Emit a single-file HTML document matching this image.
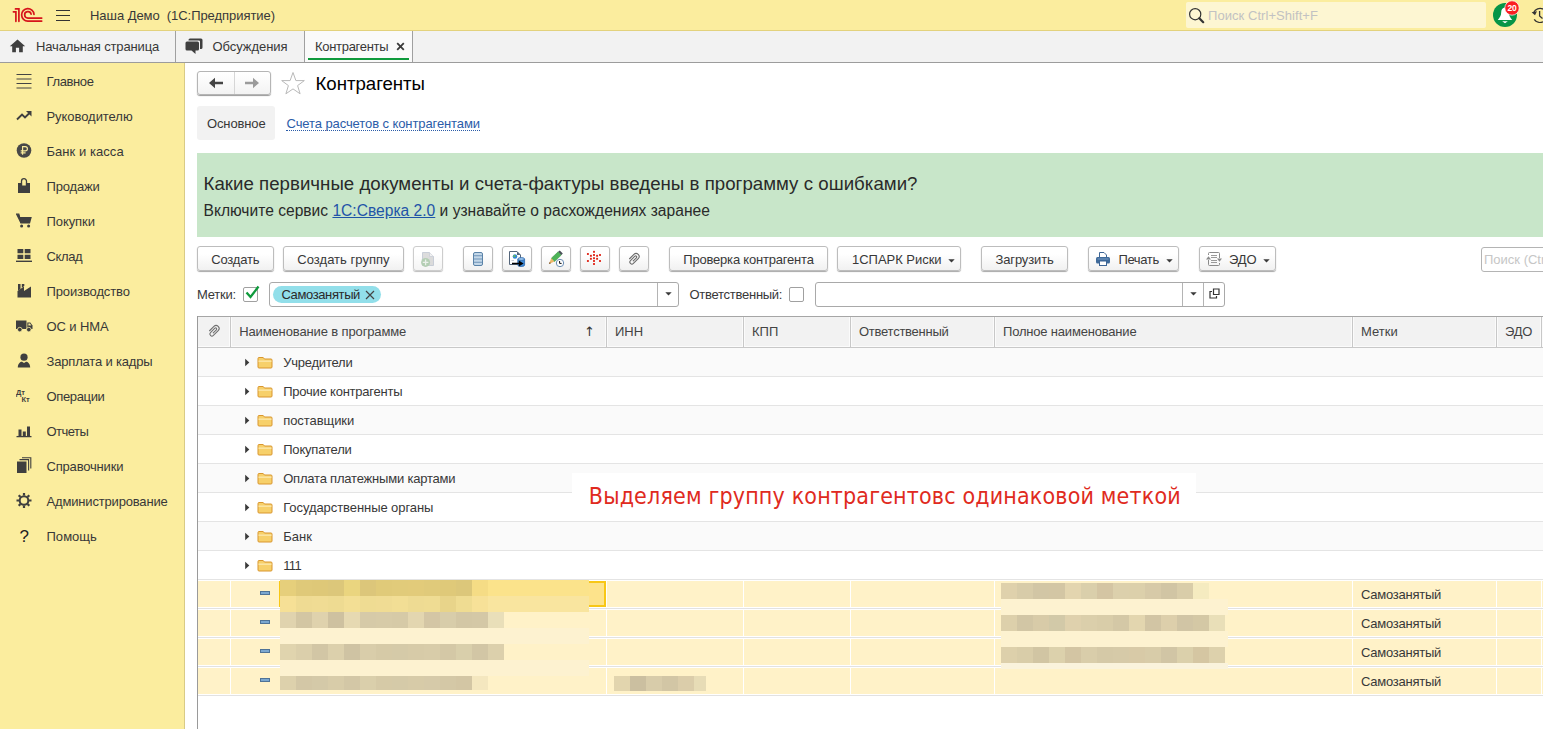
<!DOCTYPE html>
<html lang="ru"><head><meta charset="utf-8"><title>Контрагенты</title>
<style>
*{box-sizing:border-box;margin:0;padding:0}
html,body{width:1543px;height:729px;overflow:hidden;background:#fff}
body{font-family:"Liberation Sans",sans-serif;font-size:13px;color:#333;position:relative}
.abs{position:absolute}
.t{position:absolute;white-space:pre;line-height:1}
#top{position:absolute;left:0;top:0;width:1543px;height:31px;background:#fbed9e;border-bottom:1px solid #e3d27d}
#tabs{position:absolute;left:0;top:31px;width:1543px;height:32px;background:#f2f2f2;border-bottom:1px solid #9c9c9c}
#side{position:absolute;left:0;top:63px;width:185px;height:666px;background:#fbed9e;border-right:1px solid #d9cb86}
.sep{position:absolute;top:31px;width:1px;height:31px;background:#a0a0a0}
.btn{position:absolute;top:246px;height:25px;border:1px solid #bdbdbd;border-radius:3px;background:linear-gradient(#fff 30%,#f1f1f1);box-shadow:0 1px 1px #a8a8a8}
.inp{position:absolute;top:282px;height:25px;border:1px solid #a9a9a9;border-radius:3px;background:#fff}
.cb{position:absolute;top:287px;width:15px;height:15px;border:1px solid #a0a0a0;border-radius:2px;background:#fff}
.row{position:absolute;left:198px;width:1345px;height:28px}
.ln{position:absolute;left:198px;width:1345px;height:1px;background:#e4e4e4}
.cell{position:absolute;background:#fff2c8;height:26px}
.vs{position:absolute;top:317px;width:1px;height:30px;background:#d0d0d0;border-left:0}
.mz{position:absolute;height:16px;width:16px}
</style></head><body>

<div id="top"></div>
<svg class="abs" style="left:12px;top:7px" width="32" height="16" viewBox="0 0 32 16"><g fill="none" stroke="#d6141b" stroke-width="1.7" stroke-linecap="round" stroke-linejoin="miter"><path d="M3.500 1.900H6.900V14.300"/><path d="M1.400 4.800H3.900V14.300"/><path d="M22 7.300A6.200 6.200 0 1 0 15.850 14.050H29.700"/><path d="M19.100 7.200A3.250 3.250 0 1 0 15.900 11.100H29.700"/></g></svg>
<svg class="abs" style="left:56px;top:9px" width="15" height="13" viewBox="0 0 15 13"><g stroke="#333" stroke-width="1.2"><path d="M0 1.5H14M0 6.5H14M0 11.5H14"/></g></svg>
<span class="t" style="left:90px;top:9.00px;font-size:13px;color:#383838;letter-spacing:-0.049px;">Наша Демо  (1С:Предприятие)</span>
<div class="abs" style="left:1186px;top:2px;width:300px;height:26px;background:#fdf6d2;border-radius:2px"></div>
<svg class="abs" style="left:1188px;top:7px" width="17" height="17" viewBox="0 0 17 17"><circle cx="7.2" cy="7.2" r="5.6" fill="none" stroke="#333" stroke-width="1.2"/><path d="M11.3 11.3L15.2 15.2" stroke="#333" stroke-width="2.2" stroke-linecap="round"/></svg>
<span class="t" style="left:1208px;top:9.00px;font-size:13px;color:#c2c2c2;letter-spacing:0.056px;">Поиск Ctrl+Shift+F</span>
<svg class="abs" style="left:1490px;top:0" width="32" height="31" viewBox="0 0 32 31"><circle cx="15" cy="15" r="12" fill="#069547"/><path d="M15 7.500c-2.600 0-3.800 2.200-3.800 4.800 0 3.500-1.600 5.600-3.400 7.600h14.400c-1.800-2-3.400-4.100-3.400-7.600 0-2.600-1.200-4.800-3.800-4.800z" fill="#fff"/><path d="M12.200 21.200H17.800L15 23.200z" fill="#fff"/><circle cx="22" cy="8" r="7.200" fill="#fb1f22" stroke="#fff" stroke-width="0.700"/><text x="22.100" y="11" font-family="Liberation Sans, sans-serif" font-size="8.500" font-weight="bold" fill="#fff" text-anchor="middle" letter-spacing="-0.200">20</text></svg>
<svg class="abs" style="left:1530px;top:6px" width="13" height="20" viewBox="0 0 13 20"><g fill="none" stroke="#333" stroke-width="1.300"><path d="M13 3.080A7 7 0 0 0 3.700 6.500"/><path d="M4.200 13.300A7 7 0 0 0 13 15.730"/><path d="M9.600 5V10L12.500 12.500"/></g><path d="M1.600 6.200L7 5.300L5 9.300z" fill="#333"/></svg>
<div id="tabs"></div>
<div class="abs" style="left:305px;top:31px;width:107px;height:31px;background:#fafafa"></div>
<div class="sep" style="left:175px"></div><div class="sep" style="left:304px"></div><div class="sep" style="left:412px"></div>
<svg class="abs" style="left:9px;top:39px" width="17" height="14" viewBox="0 0 17 14"><path d="M8.500 0.600L0.800 7.300H3.200V13.200H6.900V8.800H10.100V13.200H13.800V7.300H16.200z" fill="#3f3f3f"/></svg>
<span class="t" style="left:36px;top:40.00px;font-size:13px;color:#383838;letter-spacing:-0.155px;">Начальная страница</span>
<svg class="abs" style="left:185px;top:38px" width="18" height="17" viewBox="0 0 18 17"><path d="M5 0.500H16a1.500 1.500 0 0 1 1.500 1.500V9.500a1.500 1.500 0 0 1-1.500 1.500H15V3.500a1 1 0 0 0-1-1H3.500V2A1.500 1.500 0 0 1 5 0.500z" fill="#3f3f3f"/><path d="M2 3.500H12.500a1.500 1.500 0 0 1 1.500 1.500V11a1.500 1.500 0 0 1-1.500 1.500H10.500V16L6.500 12.500H2A1.500 1.500 0 0 1 0.500 11V5A1.500 1.500 0 0 1 2 3.500z" fill="#3f3f3f"/></svg>
<span class="t" style="left:212.5px;top:40.00px;font-size:13px;color:#383838;letter-spacing:-0.056px;">Обсуждения</span>
<span class="t" style="left:315px;top:40.00px;font-size:13px;color:#383838;letter-spacing:-0.297px;">Контрагенты</span>
<svg class="abs" style="left:396px;top:42px" width="9" height="9" viewBox="0 0 9 9"><path d="M1.200 1.200L7.800 7.800M7.800 1.200L1.200 7.800" stroke="#3a3a3a" stroke-width="1.800"/></svg>
<div class="abs" style="left:308px;top:58px;width:101px;height:2px;background:#0f9a3c"></div>
<div id="side"></div>
<svg class="abs" style="left:16px;top:72px" width="17" height="17" viewBox="0 0 17 17"><path d="M0 0.600H15M0 5.100H15M0 9.600H15M0 14.100H15" stroke="#444" stroke-width="1.100" transform="translate(0.500,1.900)"/></svg>
<span class="t" style="left:46.5px;top:75.00px;font-size:13px;color:#383838;letter-spacing:-0.382px;">Главное</span>
<svg class="abs" style="left:16px;top:107px" width="17" height="17" viewBox="0 0 17 17"><path d="M1 12.500L6 7.500L9 10.500L14 5.500" fill="none" stroke="#3f3f3f" stroke-width="1.900"/><path d="M10 4H15.500V9.500z" fill="#3f3f3f"/></svg>
<span class="t" style="left:46.5px;top:110.00px;font-size:13px;color:#383838;letter-spacing:-0.053px;">Руководителю</span>
<svg class="abs" style="left:16px;top:142px" width="17" height="17" viewBox="0 0 17 17"><circle cx="8" cy="8.500" r="7.300" fill="#484848"/><path d="M6.600 12.800V4.600H9.300a2.100 2.100 0 0 1 0 4.200H4.700M4.700 10.800H9.600" fill="none" stroke="#fbed9e" stroke-width="1.150"/></svg>
<span class="t" style="left:46.5px;top:145.00px;font-size:13px;color:#383838;letter-spacing:0.054px;">Банк и касса</span>
<svg class="abs" style="left:16px;top:177px" width="17" height="17" viewBox="0 0 17 17"><path d="M2 6H14V16H2z" fill="#3f3f3f"/><path d="M5.500 8.500V4.200a2.500 2.500 0 0 1 5 0V8.500" fill="none" stroke="#3f3f3f" stroke-width="1.300"/><path d="M6.200 6h3.600v2.500h-3.600z" fill="#fbed9e"/></svg>
<span class="t" style="left:46.5px;top:180.00px;font-size:13px;color:#383838;letter-spacing:-0.157px;">Продажи</span>
<svg class="abs" style="left:16px;top:212px" width="17" height="17" viewBox="0 0 17 17"><path d="M0 2.200H2.800L4 5H15.800L14 11.500H4.600z" fill="#3f3f3f"/><path d="M0 2.200H2.800L5 11" fill="none" stroke="#3f3f3f" stroke-width="1.300"/><circle cx="5.600" cy="14" r="1.500" fill="#3f3f3f"/><circle cx="12.600" cy="14" r="1.500" fill="#3f3f3f"/></svg>
<span class="t" style="left:46.5px;top:215.00px;font-size:13px;color:#383838;letter-spacing:-0.072px;">Покупки</span>
<svg class="abs" style="left:16px;top:247px" width="17" height="17" viewBox="0 0 17 17"><path d="M1.500 2H7.300V6.300H1.500zM8.700 2H14.500V6.300H8.700zM1.500 7.700H7.300V12H1.500zM8.700 7.700H14.500V12H8.700z" fill="#3f3f3f"/><path d="M0 14.300H16" stroke="#3f3f3f" stroke-width="1.400"/></svg>
<span class="t" style="left:46.5px;top:250.00px;font-size:13px;color:#383838;letter-spacing:-0.385px;">Склад</span>
<svg class="abs" style="left:16px;top:282px" width="17" height="17" viewBox="0 0 17 17"><path d="M1.500 15.500V9L8 4.500V9L15 4.500V15.500z" fill="#3f3f3f"/><path d="M2 2H4.500V7L2 8.800zM5.800 2H8.300V4L5.800 5.800z" fill="#3f3f3f"/></svg>
<span class="t" style="left:46.5px;top:285.00px;font-size:13px;color:#383838;letter-spacing:-0.122px;">Производство</span>
<svg class="abs" style="left:16px;top:317px" width="17" height="17" viewBox="0 0 17 17"><path d="M0 3.500H10.500V12H0z" fill="#3f3f3f"/><path d="M11.300 5.500H14.300L16.500 8.500V12H11.300z" fill="#3f3f3f"/><path d="M12.400 6.600h1.600l1.300 2h-2.900z" fill="#fbed9e"/><circle cx="3.800" cy="12.600" r="2.300" fill="#3f3f3f" stroke="#fbed9e" stroke-width="0.800"/><circle cx="12.800" cy="12.600" r="2.300" fill="#3f3f3f" stroke="#fbed9e" stroke-width="0.800"/></svg>
<span class="t" style="left:46.5px;top:320.00px;font-size:13px;color:#383838;letter-spacing:-0.097px;">ОС и НМА</span>
<svg class="abs" style="left:16px;top:352px" width="17" height="17" viewBox="0 0 17 17"><circle cx="8" cy="5.200" r="3.600" fill="#3f3f3f"/><path d="M1.800 15.500c0-4 2.500-5.800 4.200-5.800l2 1.200 2-1.200c1.700 0 4.200 1.800 4.200 5.800z" fill="#3f3f3f"/></svg>
<span class="t" style="left:46.5px;top:355.00px;font-size:13px;color:#383838;letter-spacing:-0.174px;">Зарплата и кадры</span>
<svg class="abs" style="left:16px;top:387px" width="17" height="17" viewBox="0 0 17 17"><text x="0" y="7.500" font-family="Liberation Sans,sans-serif" font-weight="bold" font-size="7.500" fill="#3f3f3f">Дт</text><text x="5.500" y="14.500" font-family="Liberation Sans,sans-serif" font-weight="bold" font-size="7.500" fill="#3f3f3f">Кт</text></svg>
<span class="t" style="left:46.5px;top:390.00px;font-size:13px;color:#383838;letter-spacing:-0.352px;">Операции</span>
<svg class="abs" style="left:16px;top:422px" width="17" height="17" viewBox="0 0 17 17"><path d="M2.500 7.500H5.500V14H2.500zM6.800 9.500H9.800V14H6.800zM11 4.500H14V14H11z" fill="#3f3f3f"/><path d="M0.500 14.600H15.500" stroke="#3f3f3f" stroke-width="1.300"/></svg>
<span class="t" style="left:46.5px;top:425.00px;font-size:13px;color:#383838;letter-spacing:-0.506px;">Отчеты</span>
<svg class="abs" style="left:16px;top:457px" width="17" height="17" viewBox="0 0 17 17"><path d="M1 4.500H10.500V16H1z" fill="#3f3f3f"/><path d="M3.500 2.600H12.600V13.500M6 0.700H14.800V11.500" fill="none" stroke="#3f3f3f" stroke-width="1.100"/></svg>
<span class="t" style="left:46.5px;top:460.00px;font-size:13px;color:#383838;letter-spacing:-0.179px;">Справочники</span>
<svg class="abs" style="left:16px;top:492px" width="17" height="17" viewBox="0 0 17 17"><circle cx="8" cy="8.500" r="4.300" fill="none" stroke="#3f3f3f" stroke-width="2"/><g stroke="#3f3f3f" stroke-width="2.200"><path d="M8 1V3.500M8 13.500V16M0.500 8.500H3M13 8.500H15.500M2.700 3.200L4.500 5M11.500 12L13.300 13.800M2.700 13.800L4.500 12M11.500 5L13.300 3.200"/></g></svg>
<span class="t" style="left:46.5px;top:495.00px;font-size:13px;color:#383838;letter-spacing:-0.169px;">Администрирование</span>
<svg class="abs" style="left:16px;top:527px" width="17" height="17" viewBox="0 0 17 17"><text x="3.500" y="14.500" font-family="Liberation Sans,sans-serif" font-size="17" fill="#222">?</text></svg>
<span class="t" style="left:46.5px;top:530.00px;font-size:13px;color:#383838;letter-spacing:0.030px;">Помощь</span>
<div class="abs" style="left:197px;top:71px;width:74px;height:24px;border:1px solid #b5b5b5;border-radius:3px;background:linear-gradient(#fff,#f3f3f3);box-shadow:0 1px 1px #999"></div>
<div class="abs" style="left:234px;top:72px;width:1px;height:22px;background:#d6d6d6"></div>
<svg class="abs" style="left:208px;top:77px" width="16" height="12" viewBox="0 0 16 12"><path d="M1 6L7 0.800V4.700H15V7.300H7V11.200z" fill="#444"/></svg>
<svg class="abs" style="left:244px;top:77px" width="16" height="12" viewBox="0 0 16 12"><path d="M15 6L9 0.800V4.700H1V7.300H9V11.200z" fill="#9b9b9b"/></svg>
<svg class="abs" style="left:280px;top:71px" width="26" height="25" viewBox="0 0 26 25"><path d="M13 1.500L15.900 9.600H24.300L17.600 14.600L20.100 22.800L13 17.900L5.900 22.800L8.400 14.600L1.700 9.600H10.100z" fill="#fff" stroke="#b9b9b9" stroke-width="1"/></svg>
<span class="t" style="left:315.5px;top:74.80px;font-size:18.67px;color:#000;letter-spacing:-0.034px;">Контрагенты</span>
<div class="abs" style="left:197px;top:106px;width:78px;height:34px;background:#f2f2f2;border-radius:3px"></div>
<span class="t" style="left:207px;top:117.00px;font-size:13px;color:#383838;letter-spacing:-0.135px;">Основное</span>
<span class="t" style="left:286.5px;top:117.00px;font-size:13px;color:#2b5ca8;letter-spacing:-0.093px;">Счета расчетов с контрагентами</span>
<div class="abs" style="left:286px;top:130px;width:194px;height:0;border-top:1px dotted #2b5ca8"></div>
<div class="abs" style="left:197px;top:153px;width:1346px;height:84px;background:#c8e6c9"></div>
<span class="t" style="left:203.5px;top:174.80px;font-size:18.67px;color:#2a2a2a;letter-spacing:0.025px;">Какие первичные документы и счета-фактуры введены в программу с ошибками?</span>
<span class="t" style="left:203.5px;top:202.99px;font-size:15.6px;color:#2a2a2a;">Включите сервис <span style="color:#1f54a8;text-decoration:underline">1С:Сверка 2.0</span> и узнавайте о расхождениях заранее</span>
<div class="btn" style="left:197px;width:77px;"></div>
<span class="t" style="left:211.3px;top:252.60px;font-size:13px;color:#383838;letter-spacing:-0.201px;">Создать</span>
<div class="btn" style="left:283px;width:121px;"></div>
<span class="t" style="left:297.3px;top:252.60px;font-size:13px;color:#383838;letter-spacing:0.027px;">Создать группу</span>
<div class="btn" style="left:413px;width:30px;opacity:.75"></div>
<div class="btn" style="left:463px;width:30px;"></div>
<div class="btn" style="left:502px;width:30px;"></div>
<div class="btn" style="left:541px;width:30px;"></div>
<div class="btn" style="left:580px;width:30px;"></div>
<div class="btn" style="left:619px;width:30px;"></div>
<div class="btn" style="left:669px;width:159px;"></div>
<span class="t" style="left:683.3px;top:252.60px;font-size:13px;color:#383838;letter-spacing:-0.200px;">Проверка контрагента</span>
<div class="btn" style="left:837px;width:124px;"></div>
<span class="t" style="left:852px;top:252.60px;font-size:13px;color:#383838;letter-spacing:-0.023px;">1СПАРК Риски</span>
<div class="btn" style="left:981px;width:87px;"></div>
<span class="t" style="left:995.5px;top:252.60px;font-size:13px;color:#383838;letter-spacing:-0.140px;">Загрузить</span>
<div class="btn" style="left:1088px;width:91px;"></div>
<span class="t" style="left:1118.4px;top:252.60px;font-size:13px;color:#383838;letter-spacing:-0.349px;">Печать</span>
<div class="btn" style="left:1199px;width:77px;"></div>
<span class="t" style="left:1229.1px;top:252.60px;font-size:13px;color:#383838;letter-spacing:-0.176px;">ЭДО</span>
<svg class="abs" style="left:947.5px;top:258.5px" width="7" height="4" viewBox="0 0 7 4"><path d="M0.300 0.300H6.700L3.500 3.600z" fill="#3a3a3a"/></svg>
<svg class="abs" style="left:1165.5px;top:258.5px" width="7" height="4" viewBox="0 0 7 4"><path d="M0.300 0.300H6.700L3.500 3.600z" fill="#3a3a3a"/></svg>
<svg class="abs" style="left:1262.5px;top:258.5px" width="7" height="4" viewBox="0 0 7 4"><path d="M0.300 0.300H6.700L3.500 3.600z" fill="#3a3a3a"/></svg>
<div class="abs" style="left:1481px;top:247px;width:70px;height:25px;border:1px solid #b4b4b4;border-radius:3px;background:#fff"></div>
<span class="t" style="left:1484px;top:252.60px;font-size:13px;color:#c6c6c6;">Поиск (Ctrl+F)</span>
<span class="t" style="left:197px;top:288.00px;font-size:13px;color:#383838;letter-spacing:-0.216px;">Метки:</span>
<div class="cb" style="left:243px"></div>
<svg class="abs" style="left:245px;top:284px" width="15" height="16" viewBox="0 0 15 16"><path d="M1.500 8.500L5.500 13L13.500 2.500" fill="none" stroke="#0f9a3c" stroke-width="2.300"/></svg>
<div class="inp" style="left:269px;width:410px"></div><div class="abs" style="left:657px;top:283px;width:1px;height:23px;background:#b4b4b4"></div>
<div class="abs" style="left:273px;top:286px;width:108px;height:17px;border-radius:9px;background:#92dfea"></div>
<span class="t" style="left:281.4px;top:288.00px;font-size:13px;color:#2a2a2a;letter-spacing:-0.379px;">Самозанятый</span>
<svg class="abs" style="left:365px;top:290px" width="10" height="10" viewBox="0 0 10 10"><path d="M1 1L9 9M9 1L1 9" stroke="#444" stroke-width="1.200"/></svg>
<svg class="abs" style="left:664.5px;top:292px" width="7" height="4" viewBox="0 0 7 4"><path d="M0.300 0.300H6.700L3.500 3.600z" fill="#3a3a3a"/></svg>
<span class="t" style="left:689.5px;top:288.00px;font-size:13px;color:#383838;letter-spacing:-0.268px;">Ответственный:</span>
<div class="cb" style="left:789px"></div>
<div class="inp" style="left:815px;width:410px"></div><div class="abs" style="left:1182px;top:283px;width:1px;height:23px;background:#b4b4b4"></div><div class="abs" style="left:1203px;top:283px;width:1px;height:23px;background:#b4b4b4"></div>
<svg class="abs" style="left:1189.5px;top:292px" width="7" height="4" viewBox="0 0 7 4"><path d="M0.300 0.300H6.700L3.500 3.600z" fill="#3a3a3a"/></svg>
<svg class="abs" style="left:1209px;top:288px" width="11" height="11" viewBox="0 0 11 11"><path d="M4.500 1H10V6.500H4.500z" fill="none" stroke="#333" stroke-width="1.200"/><path d="M3 3.500H1V10H7.500V8" fill="none" stroke="#333" stroke-width="1.200"/></svg>
<div class="abs" style="left:197px;top:316px;width:1346px;height:32px;background:#f2f2f2;border-top:1px solid #a6a6a6;border-bottom:1px solid #c8c8c8"></div><div class="abs" style="left:198px;top:346px;width:1345px;height:1px;background:#fbfbfb"></div>
<div class="abs" style="left:197px;top:316px;width:1px;height:413px;background:#9a9a9a"></div>
<div class="vs" style="left:229px;background:#fbfbfb;height:29px"></div><div class="vs" style="left:230px;background:#c8c8c8"></div><div class="vs" style="left:231px;background:#fbfbfb;height:29px"></div>
<div class="vs" style="left:605px;background:#fbfbfb;height:29px"></div><div class="vs" style="left:606px;background:#c8c8c8"></div><div class="vs" style="left:607px;background:#fbfbfb;height:29px"></div>
<div class="vs" style="left:742px;background:#fbfbfb;height:29px"></div><div class="vs" style="left:743px;background:#c8c8c8"></div><div class="vs" style="left:744px;background:#fbfbfb;height:29px"></div>
<div class="vs" style="left:849px;background:#fbfbfb;height:29px"></div><div class="vs" style="left:850px;background:#c8c8c8"></div><div class="vs" style="left:851px;background:#fbfbfb;height:29px"></div>
<div class="vs" style="left:993px;background:#fbfbfb;height:29px"></div><div class="vs" style="left:994px;background:#c8c8c8"></div><div class="vs" style="left:995px;background:#fbfbfb;height:29px"></div>
<div class="vs" style="left:1351px;background:#fbfbfb;height:29px"></div><div class="vs" style="left:1352px;background:#c8c8c8"></div><div class="vs" style="left:1353px;background:#fbfbfb;height:29px"></div>
<div class="vs" style="left:1495px;background:#fbfbfb;height:29px"></div><div class="vs" style="left:1496px;background:#c8c8c8"></div><div class="vs" style="left:1497px;background:#fbfbfb;height:29px"></div>
<div class="vs" style="left:1540px;background:#fbfbfb;height:29px"></div><div class="vs" style="left:1541px;background:#c8c8c8"></div><div class="vs" style="left:1542px;background:#fbfbfb;height:29px"></div>
<span class="t" style="left:239.2px;top:325.10px;font-size:13px;color:#444;letter-spacing:-0.128px;">Наименование в программе</span>
<span class="t" style="left:584px;top:325.10px;font-size:13px;color:#333;font-family:'DejaVu Sans','DejaVu Sans',sans-serif;">↑</span>
<span class="t" style="left:615px;top:325.10px;font-size:13px;color:#444;">ИНН</span>
<span class="t" style="left:752px;top:325.10px;font-size:13px;color:#444;">КПП</span>
<span class="t" style="left:859px;top:325.10px;font-size:13px;color:#444;letter-spacing:-0.257px;">Ответственный</span>
<span class="t" style="left:1003px;top:325.10px;font-size:13px;color:#444;letter-spacing:-0.187px;">Полное наименование</span>
<span class="t" style="left:1361px;top:325.10px;font-size:13px;color:#444;">Метки</span>
<span class="t" style="left:1505px;top:325.10px;font-size:13px;color:#444;letter-spacing:-0.276px;">ЭДО</span>
<div class="row" style="top:348px;background:#fafafa"></div>
<div class="ln" style="top:376px"></div>
<svg class="abs" style="left:245px;top:358px" width="5" height="9" viewBox="0 0 5 9"><path d="M0.200 0.800L4.300 4.500L0.200 8.200z" fill="#3a3a3a"/></svg>
<svg class="abs" style="left:257px;top:356px" width="16" height="13" viewBox="0 0 16 13"><path d="M1 2.500a1 1 0 0 1 1-1h4.200l1.300 1.500H14a1 1 0 0 1 1 1V11a1 1 0 0 1-1 1H2a1 1 0 0 1-1-1z" fill="#f7d06a" stroke="#d9962f" stroke-width="1"/><path d="M1.500 5.200H14.500" stroke="#fbe7a8" stroke-width="1.400"/></svg>
<span class="t" style="left:283.2px;top:356.10px;font-size:13px;color:#383838;letter-spacing:-0.222px;">Учредители</span>
<div class="ln" style="top:405px"></div>
<svg class="abs" style="left:245px;top:387px" width="5" height="9" viewBox="0 0 5 9"><path d="M0.200 0.800L4.300 4.500L0.200 8.200z" fill="#3a3a3a"/></svg>
<svg class="abs" style="left:257px;top:385px" width="16" height="13" viewBox="0 0 16 13"><path d="M1 2.500a1 1 0 0 1 1-1h4.200l1.300 1.500H14a1 1 0 0 1 1 1V11a1 1 0 0 1-1 1H2a1 1 0 0 1-1-1z" fill="#f7d06a" stroke="#d9962f" stroke-width="1"/><path d="M1.500 5.200H14.500" stroke="#fbe7a8" stroke-width="1.400"/></svg>
<span class="t" style="left:283.2px;top:385.10px;font-size:13px;color:#383838;letter-spacing:-0.223px;">Прочие контрагенты</span>
<div class="row" style="top:406px;background:#fafafa"></div>
<div class="ln" style="top:434px"></div>
<svg class="abs" style="left:245px;top:416px" width="5" height="9" viewBox="0 0 5 9"><path d="M0.200 0.800L4.300 4.500L0.200 8.200z" fill="#3a3a3a"/></svg>
<svg class="abs" style="left:257px;top:414px" width="16" height="13" viewBox="0 0 16 13"><path d="M1 2.500a1 1 0 0 1 1-1h4.200l1.300 1.500H14a1 1 0 0 1 1 1V11a1 1 0 0 1-1 1H2a1 1 0 0 1-1-1z" fill="#f7d06a" stroke="#d9962f" stroke-width="1"/><path d="M1.500 5.200H14.500" stroke="#fbe7a8" stroke-width="1.400"/></svg>
<span class="t" style="left:283.2px;top:414.10px;font-size:13px;color:#383838;letter-spacing:-0.062px;">поставщики</span>
<div class="ln" style="top:463px"></div>
<svg class="abs" style="left:245px;top:445px" width="5" height="9" viewBox="0 0 5 9"><path d="M0.200 0.800L4.300 4.500L0.200 8.200z" fill="#3a3a3a"/></svg>
<svg class="abs" style="left:257px;top:443px" width="16" height="13" viewBox="0 0 16 13"><path d="M1 2.500a1 1 0 0 1 1-1h4.200l1.300 1.500H14a1 1 0 0 1 1 1V11a1 1 0 0 1-1 1H2a1 1 0 0 1-1-1z" fill="#f7d06a" stroke="#d9962f" stroke-width="1"/><path d="M1.500 5.200H14.500" stroke="#fbe7a8" stroke-width="1.400"/></svg>
<span class="t" style="left:283.2px;top:443.10px;font-size:13px;color:#383838;letter-spacing:-0.186px;">Покупатели</span>
<div class="row" style="top:464px;background:#fafafa"></div>
<div class="ln" style="top:492px"></div>
<svg class="abs" style="left:245px;top:474px" width="5" height="9" viewBox="0 0 5 9"><path d="M0.200 0.800L4.300 4.500L0.200 8.200z" fill="#3a3a3a"/></svg>
<svg class="abs" style="left:257px;top:472px" width="16" height="13" viewBox="0 0 16 13"><path d="M1 2.500a1 1 0 0 1 1-1h4.200l1.300 1.500H14a1 1 0 0 1 1 1V11a1 1 0 0 1-1 1H2a1 1 0 0 1-1-1z" fill="#f7d06a" stroke="#d9962f" stroke-width="1"/><path d="M1.500 5.200H14.500" stroke="#fbe7a8" stroke-width="1.400"/></svg>
<span class="t" style="left:283.2px;top:472.10px;font-size:13px;color:#383838;letter-spacing:-0.201px;">Оплата платежными картами</span>
<div class="ln" style="top:521px"></div>
<svg class="abs" style="left:245px;top:503px" width="5" height="9" viewBox="0 0 5 9"><path d="M0.200 0.800L4.300 4.500L0.200 8.200z" fill="#3a3a3a"/></svg>
<svg class="abs" style="left:257px;top:501px" width="16" height="13" viewBox="0 0 16 13"><path d="M1 2.500a1 1 0 0 1 1-1h4.200l1.300 1.500H14a1 1 0 0 1 1 1V11a1 1 0 0 1-1 1H2a1 1 0 0 1-1-1z" fill="#f7d06a" stroke="#d9962f" stroke-width="1"/><path d="M1.500 5.200H14.500" stroke="#fbe7a8" stroke-width="1.400"/></svg>
<span class="t" style="left:283.2px;top:501.10px;font-size:13px;color:#383838;letter-spacing:-0.067px;">Государственные органы</span>
<div class="row" style="top:522px;background:#fafafa"></div>
<div class="ln" style="top:550px"></div>
<svg class="abs" style="left:245px;top:532px" width="5" height="9" viewBox="0 0 5 9"><path d="M0.200 0.800L4.300 4.500L0.200 8.200z" fill="#3a3a3a"/></svg>
<svg class="abs" style="left:257px;top:530px" width="16" height="13" viewBox="0 0 16 13"><path d="M1 2.500a1 1 0 0 1 1-1h4.200l1.300 1.500H14a1 1 0 0 1 1 1V11a1 1 0 0 1-1 1H2a1 1 0 0 1-1-1z" fill="#f7d06a" stroke="#d9962f" stroke-width="1"/><path d="M1.500 5.200H14.500" stroke="#fbe7a8" stroke-width="1.400"/></svg>
<span class="t" style="left:283.2px;top:530.10px;font-size:13px;color:#383838;letter-spacing:0.040px;">Банк</span>
<div class="ln" style="top:579px"></div>
<svg class="abs" style="left:245px;top:561px" width="5" height="9" viewBox="0 0 5 9"><path d="M0.200 0.800L4.300 4.500L0.200 8.200z" fill="#3a3a3a"/></svg>
<svg class="abs" style="left:257px;top:559px" width="16" height="13" viewBox="0 0 16 13"><path d="M1 2.500a1 1 0 0 1 1-1h4.200l1.300 1.500H14a1 1 0 0 1 1 1V11a1 1 0 0 1-1 1H2a1 1 0 0 1-1-1z" fill="#f7d06a" stroke="#d9962f" stroke-width="1"/><path d="M1.500 5.200H14.500" stroke="#fbe7a8" stroke-width="1.400"/></svg>
<span class="t" style="left:283.2px;top:559.10px;font-size:13px;color:#383838;letter-spacing:-0.600px;">111</span>
<div class="cell" style="left:198px;top:581px;width:32px"></div>
<div class="cell" style="left:231px;top:581px;width:375px"></div>
<div class="cell" style="left:607px;top:581px;width:136px"></div>
<div class="cell" style="left:744px;top:581px;width:106px"></div>
<div class="cell" style="left:851px;top:581px;width:143px"></div>
<div class="cell" style="left:995px;top:581px;width:357px"></div>
<div class="cell" style="left:1353px;top:581px;width:143px"></div>
<div class="cell" style="left:1497px;top:581px;width:44px"></div>
<div class="cell" style="left:1542px;top:581px;width:1px"></div>
<div class="ln" style="top:608px;background:#e2e2e2"></div>
<div class="abs" style="left:260px;top:591px;width:10px;height:4px;background:#7ba7cf;border:1px solid #4f7397"></div>
<span class="t" style="left:1361px;top:588.10px;font-size:13px;color:#383838;letter-spacing:-0.251px;">Самозанятый</span>
<div class="cell" style="left:198px;top:610px;width:32px"></div>
<div class="cell" style="left:231px;top:610px;width:375px"></div>
<div class="cell" style="left:607px;top:610px;width:136px"></div>
<div class="cell" style="left:744px;top:610px;width:106px"></div>
<div class="cell" style="left:851px;top:610px;width:143px"></div>
<div class="cell" style="left:995px;top:610px;width:357px"></div>
<div class="cell" style="left:1353px;top:610px;width:143px"></div>
<div class="cell" style="left:1497px;top:610px;width:44px"></div>
<div class="cell" style="left:1542px;top:610px;width:1px"></div>
<div class="ln" style="top:637px;background:#e2e2e2"></div>
<div class="abs" style="left:260px;top:620px;width:10px;height:4px;background:#7ba7cf;border:1px solid #4f7397"></div>
<span class="t" style="left:1361px;top:617.10px;font-size:13px;color:#383838;letter-spacing:-0.251px;">Самозанятый</span>
<div class="cell" style="left:198px;top:639px;width:32px"></div>
<div class="cell" style="left:231px;top:639px;width:375px"></div>
<div class="cell" style="left:607px;top:639px;width:136px"></div>
<div class="cell" style="left:744px;top:639px;width:106px"></div>
<div class="cell" style="left:851px;top:639px;width:143px"></div>
<div class="cell" style="left:995px;top:639px;width:357px"></div>
<div class="cell" style="left:1353px;top:639px;width:143px"></div>
<div class="cell" style="left:1497px;top:639px;width:44px"></div>
<div class="cell" style="left:1542px;top:639px;width:1px"></div>
<div class="ln" style="top:666px;background:#e2e2e2"></div>
<div class="abs" style="left:260px;top:649px;width:10px;height:4px;background:#7ba7cf;border:1px solid #4f7397"></div>
<span class="t" style="left:1361px;top:646.10px;font-size:13px;color:#383838;letter-spacing:-0.251px;">Самозанятый</span>
<div class="cell" style="left:198px;top:668px;width:32px"></div>
<div class="cell" style="left:231px;top:668px;width:375px"></div>
<div class="cell" style="left:607px;top:668px;width:136px"></div>
<div class="cell" style="left:744px;top:668px;width:106px"></div>
<div class="cell" style="left:851px;top:668px;width:143px"></div>
<div class="cell" style="left:995px;top:668px;width:357px"></div>
<div class="cell" style="left:1353px;top:668px;width:143px"></div>
<div class="cell" style="left:1497px;top:668px;width:44px"></div>
<div class="cell" style="left:1542px;top:668px;width:1px"></div>
<div class="ln" style="top:695px;background:#e2e2e2"></div>
<div class="abs" style="left:260px;top:678px;width:10px;height:4px;background:#7ba7cf;border:1px solid #4f7397"></div>
<span class="t" style="left:1361px;top:675.10px;font-size:13px;color:#383838;letter-spacing:-0.251px;">Самозанятый</span>
<div class="abs" style="left:279px;top:581px;width:327px;height:26px;background:#fde38b;border:2px solid #f8c716"></div>
<div class="abs" style="left:280px;top:580px;width:16px;height:16px;background:#e6cf7b"></div><div class="abs" style="left:296px;top:580px;width:16px;height:16px;background:#dfc979"></div><div class="abs" style="left:312px;top:580px;width:16px;height:16px;background:#dec878"></div><div class="abs" style="left:328px;top:580px;width:16px;height:16px;background:#dcc77a"></div><div class="abs" style="left:344px;top:580px;width:16px;height:16px;background:#ead57f"></div><div class="abs" style="left:360px;top:580px;width:16px;height:16px;background:#dcc67a"></div><div class="abs" style="left:376px;top:580px;width:16px;height:16px;background:#e0ca79"></div><div class="abs" style="left:392px;top:580px;width:16px;height:16px;background:#e1cb7a"></div><div class="abs" style="left:408px;top:580px;width:16px;height:16px;background:#e2cb7a"></div><div class="abs" style="left:424px;top:580px;width:16px;height:16px;background:#e0ca7a"></div><div class="abs" style="left:440px;top:580px;width:16px;height:16px;background:#dfc979"></div><div class="abs" style="left:456px;top:580px;width:16px;height:16px;background:#dcc77a"></div><div class="abs" style="left:472px;top:580px;width:16px;height:16px;background:#f5dc85"></div><div class="abs" style="left:488px;top:580px;width:101px;height:16px;background:#fbe38b"></div><div class="abs" style="left:280px;top:596px;width:16px;height:16px;background:#f6e096"></div><div class="abs" style="left:296px;top:596px;width:16px;height:16px;background:#efdb93"></div><div class="abs" style="left:312px;top:596px;width:16px;height:16px;background:#f0dc94"></div><div class="abs" style="left:328px;top:596px;width:16px;height:16px;background:#eedb92"></div><div class="abs" style="left:344px;top:596px;width:16px;height:16px;background:#f3df95"></div><div class="abs" style="left:360px;top:596px;width:16px;height:16px;background:#efdc93"></div><div class="abs" style="left:376px;top:596px;width:16px;height:16px;background:#f0dc94"></div><div class="abs" style="left:392px;top:596px;width:16px;height:16px;background:#f2de95"></div><div class="abs" style="left:408px;top:596px;width:16px;height:16px;background:#eedb93"></div><div class="abs" style="left:424px;top:596px;width:16px;height:16px;background:#efdc93"></div><div class="abs" style="left:440px;top:596px;width:16px;height:16px;background:#e8d48a"></div><div class="abs" style="left:456px;top:596px;width:16px;height:16px;background:#efdc92"></div><div class="abs" style="left:472px;top:596px;width:16px;height:16px;background:#f7e198"></div><div class="abs" style="left:488px;top:596px;width:101px;height:16px;background:#f9e59f"></div><div class="abs" style="left:280px;top:612px;width:16px;height:16px;background:#e0d3ae"></div><div class="abs" style="left:296px;top:612px;width:16px;height:16px;background:#d3c6a3"></div><div class="abs" style="left:312px;top:612px;width:16px;height:16px;background:#dfd2ad"></div><div class="abs" style="left:328px;top:612px;width:16px;height:16px;background:#cec1a0"></div><div class="abs" style="left:344px;top:612px;width:16px;height:16px;background:#e6d9b2"></div><div class="abs" style="left:360px;top:612px;width:16px;height:16px;background:#d6caa8"></div><div class="abs" style="left:376px;top:612px;width:16px;height:16px;background:#d7cba8"></div><div class="abs" style="left:392px;top:612px;width:16px;height:16px;background:#d6caa7"></div><div class="abs" style="left:408px;top:612px;width:16px;height:16px;background:#e3d6b0"></div><div class="abs" style="left:424px;top:612px;width:16px;height:16px;background:#d4c6a5"></div><div class="abs" style="left:440px;top:612px;width:16px;height:16px;background:#d8cdaa"></div><div class="abs" style="left:456px;top:612px;width:16px;height:16px;background:#d3c7a5"></div><div class="abs" style="left:472px;top:612px;width:16px;height:16px;background:#d4c8a6"></div><div class="abs" style="left:488px;top:612px;width:16px;height:16px;background:#e9dfb9"></div><div class="abs" style="left:280px;top:628px;width:309px;height:16px;background:#fdf2d0"></div><div class="abs" style="left:280px;top:644px;width:16px;height:16px;background:#e0d4ae"></div><div class="abs" style="left:296px;top:644px;width:16px;height:16px;background:#dbcfab"></div><div class="abs" style="left:312px;top:644px;width:16px;height:16px;background:#d2c6a5"></div><div class="abs" style="left:328px;top:644px;width:16px;height:16px;background:#dcd0ac"></div><div class="abs" style="left:344px;top:644px;width:16px;height:16px;background:#cfc3a3"></div><div class="abs" style="left:360px;top:644px;width:16px;height:16px;background:#d9cdaa"></div><div class="abs" style="left:376px;top:644px;width:16px;height:16px;background:#d6caa7"></div><div class="abs" style="left:392px;top:644px;width:16px;height:16px;background:#d5caa8"></div><div class="abs" style="left:408px;top:644px;width:16px;height:16px;background:#d7cba8"></div><div class="abs" style="left:424px;top:644px;width:16px;height:16px;background:#d8cca9"></div><div class="abs" style="left:440px;top:644px;width:16px;height:16px;background:#d4c8a6"></div><div class="abs" style="left:456px;top:644px;width:16px;height:16px;background:#d9cfab"></div><div class="abs" style="left:472px;top:644px;width:16px;height:16px;background:#d2c6a5"></div><div class="abs" style="left:488px;top:644px;width:16px;height:16px;background:#dcd0ac"></div><div class="abs" style="left:280px;top:660px;width:309px;height:16px;background:#fdf2d0"></div><div class="abs" style="left:280px;top:676px;width:16px;height:14px;background:#ddd1ac"></div><div class="abs" style="left:296px;top:676px;width:16px;height:14px;background:#d3c7a6"></div><div class="abs" style="left:312px;top:676px;width:16px;height:14px;background:#d4c9a8"></div><div class="abs" style="left:328px;top:676px;width:16px;height:14px;background:#d8cca9"></div><div class="abs" style="left:344px;top:676px;width:16px;height:14px;background:#d3c7a6"></div><div class="abs" style="left:360px;top:676px;width:16px;height:14px;background:#dacfab"></div><div class="abs" style="left:376px;top:676px;width:16px;height:14px;background:#d6caa7"></div><div class="abs" style="left:392px;top:676px;width:16px;height:14px;background:#d5caa8"></div><div class="abs" style="left:408px;top:676px;width:16px;height:14px;background:#d7cba8"></div><div class="abs" style="left:424px;top:676px;width:16px;height:14px;background:#d6caa9"></div><div class="abs" style="left:440px;top:676px;width:16px;height:14px;background:#d4c8a6"></div><div class="abs" style="left:456px;top:676px;width:16px;height:14px;background:#d3c6a4"></div><div class="abs" style="left:472px;top:676px;width:16px;height:14px;background:#f4e7bf"></div><div class="abs" style="left:614px;top:676px;width:16px;height:15px;background:#e2d5ae"></div><div class="abs" style="left:630px;top:676px;width:16px;height:15px;background:#cbbfa0"></div><div class="abs" style="left:646px;top:676px;width:16px;height:15px;background:#d8ccaa"></div><div class="abs" style="left:662px;top:676px;width:16px;height:15px;background:#d2c6a5"></div><div class="abs" style="left:678px;top:676px;width:16px;height:15px;background:#dbcdaa"></div><div class="abs" style="left:694px;top:676px;width:12px;height:15px;background:#e7dcb6"></div><div class="abs" style="left:1001px;top:583px;width:16px;height:16px;background:#dfd1ac"></div><div class="abs" style="left:1017px;top:583px;width:16px;height:16px;background:#d8cca9"></div><div class="abs" style="left:1033px;top:583px;width:16px;height:16px;background:#d2c6a5"></div><div class="abs" style="left:1049px;top:583px;width:16px;height:16px;background:#d3c6a4"></div><div class="abs" style="left:1065px;top:583px;width:16px;height:16px;background:#e3d5af"></div><div class="abs" style="left:1081px;top:583px;width:16px;height:16px;background:#dacfab"></div><div class="abs" style="left:1097px;top:583px;width:16px;height:16px;background:#d4c5a3"></div><div class="abs" style="left:1113px;top:583px;width:16px;height:16px;background:#dcd0ac"></div><div class="abs" style="left:1129px;top:583px;width:16px;height:16px;background:#dcd0ab"></div><div class="abs" style="left:1145px;top:583px;width:16px;height:16px;background:#d7caa8"></div><div class="abs" style="left:1161px;top:583px;width:16px;height:16px;background:#d1c5a4"></div><div class="abs" style="left:1177px;top:583px;width:16px;height:16px;background:#d9cda9"></div><div class="abs" style="left:1193px;top:583px;width:16px;height:16px;background:#f5ebc0"></div><div class="abs" style="left:1001px;top:599px;width:227px;height:16px;background:#fdf2d0"></div><div class="abs" style="left:1001px;top:615px;width:16px;height:16px;background:#ddd0ab"></div><div class="abs" style="left:1017px;top:615px;width:16px;height:16px;background:#d2c6a5"></div><div class="abs" style="left:1033px;top:615px;width:16px;height:16px;background:#d8cba8"></div><div class="abs" style="left:1049px;top:615px;width:16px;height:16px;background:#d2c9a8"></div><div class="abs" style="left:1065px;top:615px;width:16px;height:16px;background:#dfd1ad"></div><div class="abs" style="left:1081px;top:615px;width:16px;height:16px;background:#dbcfab"></div><div class="abs" style="left:1097px;top:615px;width:16px;height:16px;background:#d9cda9"></div><div class="abs" style="left:1113px;top:615px;width:16px;height:16px;background:#d4c8a6"></div><div class="abs" style="left:1129px;top:615px;width:16px;height:16px;background:#e3d6af"></div><div class="abs" style="left:1145px;top:615px;width:16px;height:16px;background:#d2c5a4"></div><div class="abs" style="left:1161px;top:615px;width:16px;height:16px;background:#ddcfab"></div><div class="abs" style="left:1177px;top:615px;width:16px;height:16px;background:#d1c5a5"></div><div class="abs" style="left:1193px;top:615px;width:16px;height:16px;background:#d4c8a5"></div><div class="abs" style="left:1209px;top:615px;width:16px;height:16px;background:#e9dfb8"></div><div class="abs" style="left:1001px;top:631px;width:227px;height:16px;background:#fdf2d0"></div><div class="abs" style="left:1001px;top:647px;width:16px;height:16px;background:#ddd0ab"></div><div class="abs" style="left:1017px;top:647px;width:16px;height:16px;background:#d9cda9"></div><div class="abs" style="left:1033px;top:647px;width:16px;height:16px;background:#d1c5a3"></div><div class="abs" style="left:1049px;top:647px;width:16px;height:16px;background:#dcd1ac"></div><div class="abs" style="left:1065px;top:647px;width:16px;height:16px;background:#d3c5a3"></div><div class="abs" style="left:1081px;top:647px;width:16px;height:16px;background:#d9cdaa"></div><div class="abs" style="left:1097px;top:647px;width:16px;height:16px;background:#d5c9a7"></div><div class="abs" style="left:1113px;top:647px;width:16px;height:16px;background:#d6caa8"></div><div class="abs" style="left:1129px;top:647px;width:16px;height:16px;background:#d8caa7"></div><div class="abs" style="left:1145px;top:647px;width:16px;height:16px;background:#d8cca9"></div><div class="abs" style="left:1161px;top:647px;width:16px;height:16px;background:#d1c5a5"></div><div class="abs" style="left:1177px;top:647px;width:16px;height:16px;background:#dbd0ab"></div><div class="abs" style="left:1193px;top:647px;width:16px;height:16px;background:#d5c6a2"></div><div class="abs" style="left:1209px;top:647px;width:16px;height:16px;background:#ddd1ac"></div><div class="abs" style="left:1001px;top:663px;width:227px;height:6px;background:#faf3dc"></div>
<svg class="abs" style="left:0;top:0" width="1543" height="729" viewBox="0 0 1543 729"><g opacity="0.800"><path d="M422.500 252.500H429.500L433.500 256.500V265.500H422.500z" fill="#d4d4d4" stroke="#bcc3cf" stroke-width="1"/><path d="M429.500 252.500V256.500H433.500" fill="#eee" stroke="#bcc3cf" stroke-width="0.800"/><circle cx="425.600" cy="262.400" r="4.500" fill="#a3c4a3"/><path d="M425.600 259.600V265.200M422.800 262.400H428.400" stroke="#e8f0e8" stroke-width="1.300"/></g><rect x="473.500" y="252.500" width="9" height="13" rx="1.500" fill="#c3d7e8" stroke="#5b83a8"/><path d="M474 255.800H482M474 259H482M474 262.200H482" stroke="#6f94b8" stroke-width="1.100"/><path d="M509.500 251.500H517L520.500 255V264.500H509.500z" fill="#fff" stroke="#54657a" stroke-width="1"/><path d="M517 251.500V255H520.500z" fill="#54657a"/><circle cx="515" cy="256.500" r="2.300" fill="#2f86d6"/><circle cx="514.400" cy="256" r="1.100" fill="#6cc04a"/><path d="M511.500 260.500H514" stroke="#b8c0cc" stroke-width="0.800"/><path d="M517.800 259V265c0 2 6.800 2 6.800 0V259" fill="#3f8ad6" stroke="#2a63a8" stroke-width="0.800"/><ellipse cx="521.200" cy="259" rx="3.400" ry="1.400" fill="#9cc6ee" stroke="#2a63a8" stroke-width="0.800"/><path d="M512 263.500H519.500" stroke="#000" stroke-width="1.500"/><path d="M518.800 260.600L523.600 263.500L518.800 266.400z" fill="#000"/><path d="M551.300 258.300L558.200 251.800L561.300 255L554.400 261.600z" fill="#4cb356" stroke="#3a9444" stroke-width="0.600"/><path d="M558.200 251.800L559.800 250.400L562.800 253.500L561.300 255z" fill="#4a5058"/><path d="M551.300 258.300L548.900 264.100L554.400 261.600z" fill="#efb868"/><path d="M548.900 264.100L549.700 262.100L551 263.200z" fill="#6b4a2a"/><circle cx="560" cy="263" r="3.700" fill="#fff" stroke="#6a8db3" stroke-width="1"/><path d="M559.600 261V263.400H561.600" fill="none" stroke="#111" stroke-width="1"/><g fill="#e0281c"><rect x="593.05" y="250.85" width="1.900" height="1.900"/><rect x="593.05" y="254.05" width="1.900" height="1.900"/><rect x="593.05" y="257.25" width="1.900" height="1.900"/><rect x="593.05" y="260.05" width="1.900" height="1.900"/><rect x="593.05" y="263.05" width="1.900" height="1.900"/><rect x="589.95" y="254.85" width="1.900" height="1.900"/><rect x="596.15" y="254.85" width="1.900" height="1.900"/><rect x="589.95" y="257.85" width="1.900" height="1.900"/><rect x="596.15" y="257.85" width="1.900" height="1.900"/><rect x="586.95" y="253.05" width="1.900" height="1.900"/><rect x="599.05" y="254.05" width="1.900" height="1.900"/><rect x="586.95" y="260.05" width="1.900" height="1.900"/><rect x="599.05" y="260.05" width="1.900" height="1.900"/></g><path d="M2.5 -2.8H8.2A2.8 2.8 0 0 1 8.2 2.8H1.9A1.9 1.9 0 0 1 1.9 -1H7.6A1 1 0 0 1 7.6 1H3.5" fill="none" stroke="#6a6a6a" stroke-width="1.0" stroke-linecap="round" transform="translate(634,258.6) rotate(-45) scale(1.08) translate(-5.500,0)"/><path d="M2.5 -2.8H8.2A2.8 2.8 0 0 1 8.2 2.8H1.9A1.9 1.9 0 0 1 1.9 -1H7.6A1 1 0 0 1 7.6 1H3.5" fill="none" stroke="#707070" stroke-width="1.0" stroke-linecap="round" transform="translate(214,330.6) rotate(-45) scale(1.08) translate(-5.500,0)"/><path d="M1099.500 257.500V252.500H1104L1106.500 255V257.500" fill="#fff" stroke="#3d6595" stroke-width="1"/><rect x="1096" y="257" width="14" height="6.500" rx="1.500" fill="#3f6a9a"/><path d="M1097.500 259H1108.500" stroke="#86a8cf" stroke-width="0.800"/><rect x="1099.500" y="261" width="7" height="4.500" fill="#fff" stroke="#3d6595" stroke-width="1"/><g fill="none" stroke="#8a8a8a" stroke-width="1"><path d="M1208.500 255V253.500a1 1 0 0 1 1-1H1218.500a1 1 0 0 1 1 1V258"/><path d="M1208.500 260V264.500a1 1 0 0 0 1 1H1218.500a1 1 0 0 0 1-1V263"/><path d="M1211 255.500H1217M1211 257.500H1217M1211 260.500H1217M1211 262.500H1217" stroke="#9a9a9a"/></g><path d="M1206 259.500L1208.500 256.200L1211 259.500z" fill="#8a8a8a"/><path d="M1217 258.500L1219.500 261.800L1222 258.500z" fill="#8a8a8a"/></svg>
<div class="abs" style="left:572px;top:473px;width:624px;height:47px;background:#fff"></div>
<span class="t" style="left:588.8px;top:484.94px;font-size:23px;color:#e02a20;font-family:'DejaVu Sans Condensed','DejaVu Sans',sans-serif;letter-spacing:0.160px;font-stretch:condensed;">Выделяем группу контрагентовс одинаковой меткой</span>
</body></html>
